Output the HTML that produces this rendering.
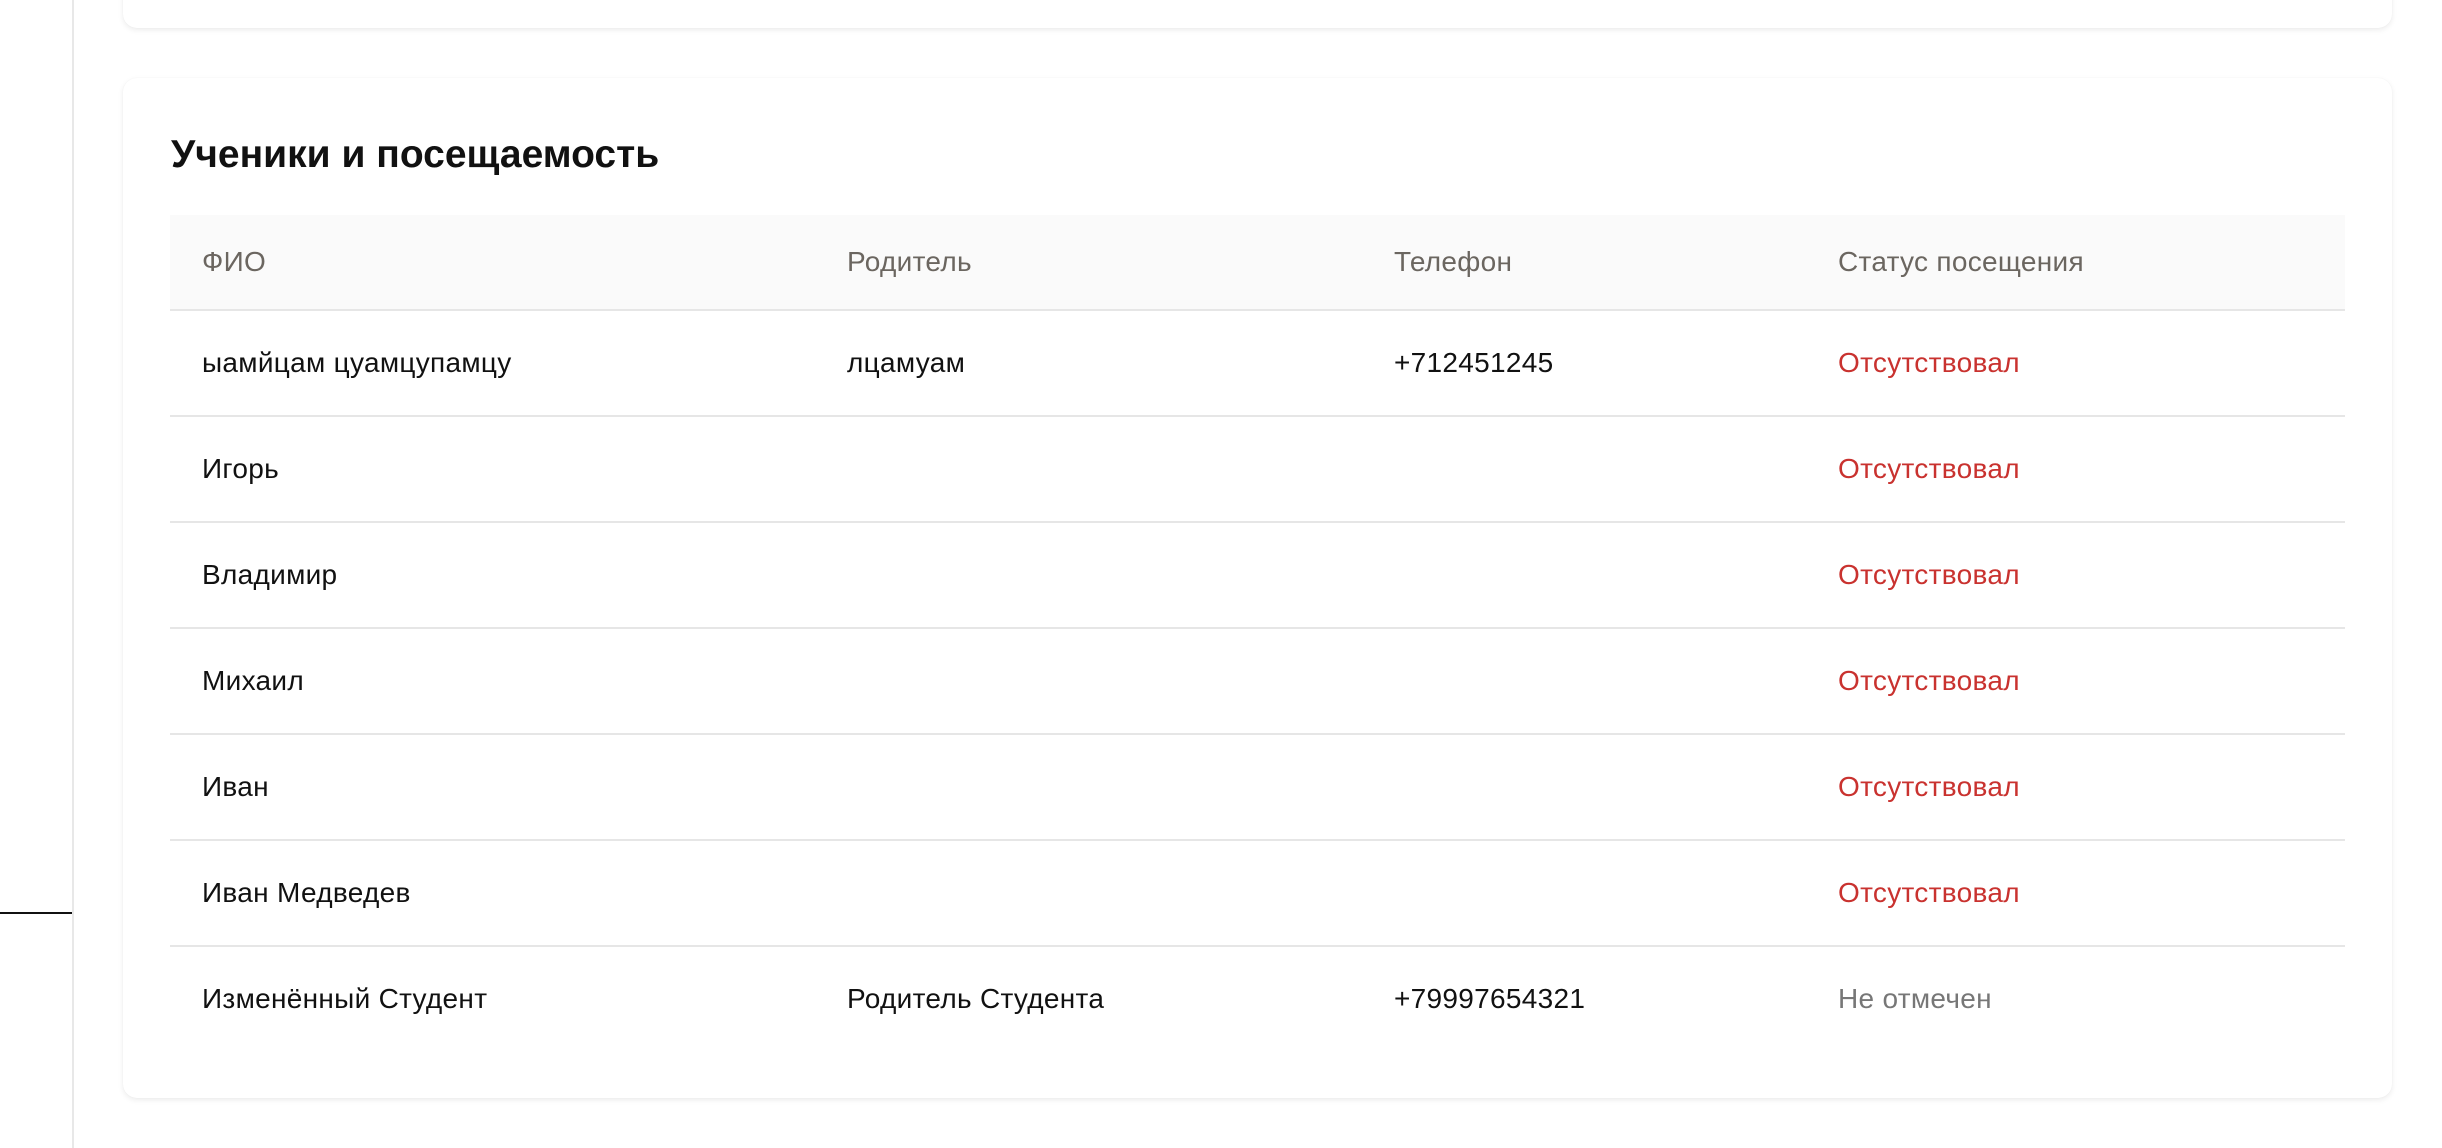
<!DOCTYPE html>
<html><head><meta charset="utf-8"><style>
html,body{margin:0;padding:0;background:#fff;width:2442px;height:1148px;overflow:hidden;font-family:"Liberation Sans","DejaVu Sans",sans-serif;}
.side{position:absolute;left:72px;top:0;width:2px;height:1148px;background:#e8e8e8;}
.blk{position:absolute;left:0;top:912px;width:72px;height:2px;background:#111;}
.card{position:absolute;background:#fff;border-radius:14px;box-shadow:0 2px 6px rgba(0,0,0,0.08),0 0 1px rgba(0,0,0,0.06);}
.c1{left:123px;top:-40px;width:2269px;height:68px;}
.c2{left:123px;top:78px;width:2269px;height:1020px;}
h2{position:absolute;left:48px;top:55px;margin:0;font-size:39px;font-weight:bold;color:#111;letter-spacing:0px;}
.tbl{position:absolute;left:47px;top:137px;width:2175px;}
.hd{height:94px;background:#fafafa;border-bottom:2px solid #e6e6e6;position:relative;}
.row{height:104px;border-bottom:2px solid #e6e6e6;position:relative;}
.row.last{border-bottom:none;}
.c{position:absolute;top:50%;transform:translateY(-50%);font-size:28px;letter-spacing:0.3px;color:#111;white-space:nowrap;}
.hd .c{color:#6b6660;}
.a{left:32px}.b{left:677px}.d{left:1224px}.e{left:1668px}
.r{color:#c9322f !important}
.g{color:#777 !important}
</style></head><body>
<div class="side"></div><div class="blk"></div>
<div class="card c1"></div>
<div class="card c2">
<h2>Ученики и посещаемость</h2>
<div class="tbl">
<div class="hd"><span class="c a">ФИО</span><span class="c b">Родитель</span><span class="c d">Телефон</span><span class="c e">Статус посещения</span></div>
<div class="row"><span class="c a">ыамйцам цуамцупамцу</span><span class="c b">лцамуам</span><span class="c d">+712451245</span><span class="c e r">Отсутствовал</span></div>
<div class="row"><span class="c a">Игорь</span><span class="c e r">Отсутствовал</span></div>
<div class="row"><span class="c a">Владимир</span><span class="c e r">Отсутствовал</span></div>
<div class="row"><span class="c a">Михаил</span><span class="c e r">Отсутствовал</span></div>
<div class="row"><span class="c a">Иван</span><span class="c e r">Отсутствовал</span></div>
<div class="row"><span class="c a">Иван Медведев</span><span class="c e r">Отсутствовал</span></div>
<div class="row last"><span class="c a">Изменённый Студент</span><span class="c b">Родитель Студента</span><span class="c d">+79997654321</span><span class="c e g">Не отмечен</span></div>
</div>
</div>
</body></html>
